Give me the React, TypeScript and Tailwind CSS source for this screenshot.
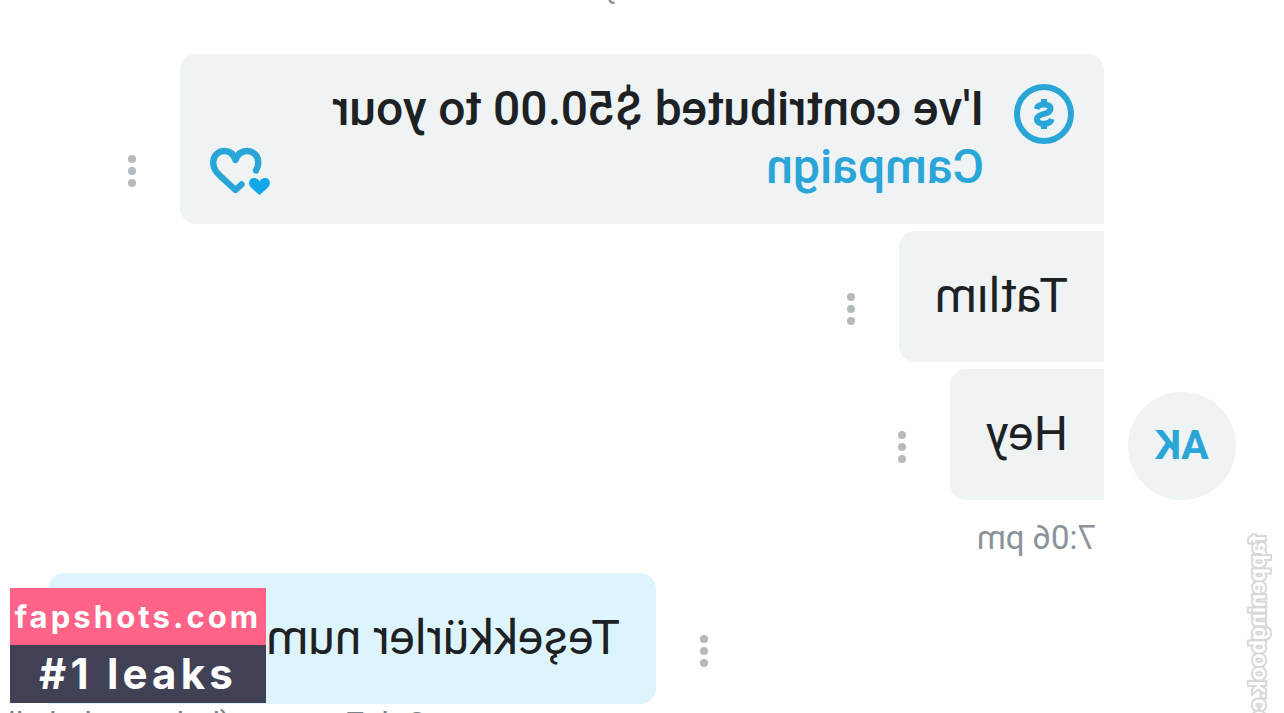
import type { ReactNode } from "react";
import clsx from "clsx";

type BubbleProps = {
  children: ReactNode;
  className?: string;
};

function Bubble({ children, className }: BubbleProps) {
  return (
    <div
      className={clsx(
        "px-9 pt-9 pb-[37px] text-5xl leading-[58px] whitespace-nowrap text-[#1d2124]",
        className
      )}
    >
      {children}
    </div>
  );
}

function MoreButton() {
  return (
    <button
      type="button"
      aria-label="Message options"
      className="mx-6 mb-[37px] flex w-12 shrink-0 flex-col items-center gap-1"
    >
      <span className="size-2 rounded-full bg-[#b4babd]" />
      <span className="size-2 rounded-full bg-[#b4babd]" />
      <span className="size-2 rounded-full bg-[#b4babd]" />
    </button>
  );
}

function DollarIcon() {
  return (
    <svg
      viewBox="0 0 60 60"
      className="size-[60px] shrink-0 text-[#2aa5d8]"
      fill="none"
      stroke="currentColor"
      aria-hidden="true"
    >
      <circle cx="30" cy="30" r="27" strokeWidth="6" />
      <path
        d="M37.5 25C36.5 21.5 33.5 20.5 30 20.5c-4 0-6.5 1.5-6.5 4.2 0 3.1 2.5 4.1 6.5 5.1s7 2.2 7 5.4c0 3-3 4.5-7 4.5-3.8 0-6.8-1.2-7.7-4.7"
        strokeWidth="6"
      />
      <path d="M30 15v5M30 40v5" strokeWidth="6" />
    </svg>
  );
}

function HeartsIcon() {
  return (
    <svg
      viewBox="0 0 60 49"
      className="h-[49px] w-[60px] shrink-0 -scale-x-100"
      fill="none"
      aria-hidden="true"
    >
      <path
        d="M31.5 37.5L25.5 43L14 32.5C8 27 3.2 23 3.2 15.5C3.2 9 8 4 14.5 4C20 4 23.5 7 25.5 13C27.5 7 31.5 4 37 4C43.5 4 48.3 9 48.3 15.5C48.3 19 47.5 21 46 23.5"
        stroke="#2aa5d8"
        strokeWidth="6.4"
        strokeLinecap="round"
        strokeLinejoin="round"
      />
      <path
        d="M49.5 48L41 40.5C37.5 36.5 39 31 44 31C46.5 31 48.5 32.5 49.5 34.5C50.5 32.5 52.5 31 55 31C60 31 61.5 36.5 58 40.5Z"
        fill="#0fa9ea"
      />
    </svg>
  );
}

export default function App() {
  return (
    <div className="relative h-screen overflow-hidden bg-white font-['Roboto','Liberation_Sans',sans-serif]">
      {/* the conversation is shown flipped left to right */}
      <main className="relative flex h-full -scale-x-100 flex-col">
        <p className="-mt-7 text-center text-[30px] leading-8 text-[#8b9299]">Today</p>

        <section className="flex items-end gap-6 pt-[50px] pr-9 pl-12">
          <div className="flex size-[108px] shrink-0 items-center justify-center rounded-full bg-[#eff3f4] text-[41px] font-bold text-[#2aa5d8]">
            AK
          </div>
          <div className="flex flex-1 flex-col gap-[7px]">
            <div className="flex items-end pr-12">
              <div className="flex flex-1 items-end rounded-2xl rounded-bl-none bg-[#eff3f4] px-[30px] pt-[26px] pb-7">
                <div className="self-start pt-1">
                  <DollarIcon />
                </div>
                <p className="flex-1 pl-[30px] text-5xl leading-[58px] font-medium whitespace-nowrap text-[#1d2124]">
                  I've contributed $50.00 to your
                  <br />
                  <a href="#campaign" className="text-[#2aa5d8]">
                    Campaign
                  </a>
                </p>
                <HeartsIcon />
              </div>
              <MoreButton />
            </div>
            <div className="flex items-end">
              <Bubble className="rounded-r-2xl bg-[#eff3f4]">Tatlım</Bubble>
              <MoreButton />
            </div>
            <div className="flex items-end">
              <Bubble className="rounded-r-2xl bg-[#eff3f4]">Hey</Bubble>
              <MoreButton />
            </div>
          </div>
        </section>

        <p className="mt-[18px] pl-[188px] text-[33px] leading-[39px] text-[#8b9299]">7:06 pm</p>

        <section className="mt-4 flex items-end justify-end pr-12">
          <MoreButton />
          <Bubble className="w-[608px] rounded-2xl rounded-br-none bg-[#ddf4fd]">
            Teşekkürler num
          </Bubble>
        </section>
        <p className="flex justify-end pr-2 text-[32px] leading-[38px] whitespace-nowrap text-[#7b8288]">
          Cok Zaman o (bul sana bel all
        </p>

        <span className="absolute top-[535px] left-3 text-[22px] leading-7 font-bold whitespace-nowrap text-white [font-family:'Liberation_Sans',sans-serif] [paint-order:stroke] [writing-mode:vertical-rl] [-webkit-text-stroke:4px_#d8d8d8]">
          fappeningbook.com
        </span>
      </main>

      <aside className="absolute bottom-[10px] left-[10px] w-64 text-center font-bold whitespace-nowrap text-white [font-family:'Inter',sans-serif]">
        <p className="bg-[#ff6488] text-[31px] leading-[57px] tracking-widest">fapshots.com</p>
        <p className="bg-[#404155] text-[42px] leading-[58px] tracking-widest">#1 leaks</p>
      </aside>
    </div>
  );
}
